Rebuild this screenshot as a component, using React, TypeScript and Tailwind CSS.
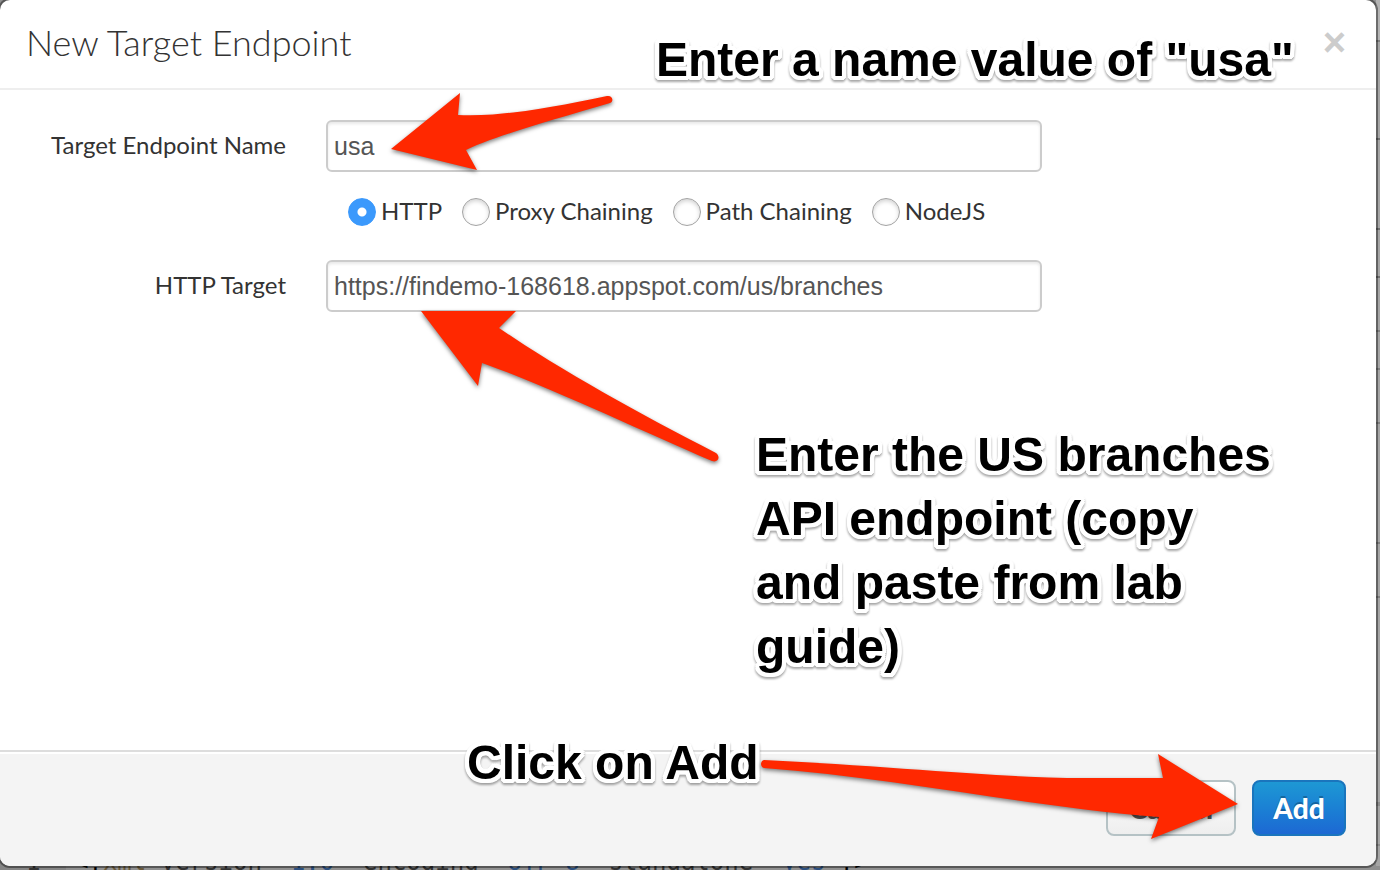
import type { ReactNode } from "react";

const TARGET_TYPES = ["HTTP", "Proxy Chaining", "Path Chaining", "NodeJS"];

const FIELD =
  "h-[52px] w-full max-w-[716px] rounded-[6px] border-2 border-[#cccccc] bg-white px-1.5 font-['Liberation_Sans',sans-serif] text-[25px] text-[#555555] shadow-[inset_0_2px_3px_rgba(0,0,0,0.09)] outline-none";

const LABEL = "w-[286px] shrink-0 pb-0.5 text-right text-[24px] leading-[30px] text-[#333333]";

const RADIO =
  "size-7 shrink-0 appearance-none rounded-full border border-[#a3a3a3] bg-white shadow-[inset_0_2px_4px_rgba(0,0,0,0.18)] checked:border-[#3b99fc] checked:bg-[radial-gradient(circle,#ffffff_0_4px,#3b99fc_5px)] checked:shadow-none";

function Note({ className, children }: { className: string; children: ReactNode }) {
  return (
    <p
      className={`absolute font-['Liberation_Sans',sans-serif] text-[48px] leading-[64px] font-bold whitespace-nowrap text-black drop-shadow-[0_2px_1px_rgba(0,0,0,0.35)] [text-shadow:4px_0_0_#fff,-4px_0_0_#fff,0_4px_0_#fff,0_-4px_0_#fff,3px_3px_0_#fff,-3px_3px_0_#fff,3px_-3px_0_#fff,-3px_-3px_0_#fff,4px_2px_0_#fff,-4px_2px_0_#fff,4px_-2px_0_#fff,-4px_-2px_0_#fff,2px_4px_0_#fff,-2px_4px_0_#fff,2px_-4px_0_#fff,-2px_-4px_0_#fff,2px_0_0_#fff,-2px_0_0_#fff] ${className}`}
    >
      {children}
    </p>
  );
}

function Arrows() {
  return (
    <svg
      className="absolute top-0 left-0 overflow-visible drop-shadow-[0_2px_2px_rgba(0,0,0,0.5)]"
      width="1380"
      height="870"
      fill="#ff2800"
      aria-hidden="true"
    >
      <path d="M391 149 L460 93 L458 115 C500 117 550 108 607 96 C613 95 614 102 610 103 C560 118 500 134 466 150 L477 170 Z" />
      <path d="M421 311 H516 L499 328 C560 370 640 414 716 453 C721 457 718 463 712 461 C640 430 545 385 482 363 L478 386 Z" />
      <path d="M764 760 C890 766 1000 778 1085 778 L1163 778 L1158 754 L1238 804 L1151 839 L1159 817 C1030 807 890 777 764 768 C760 767 760 761 764 760 Z" />
    </svg>
  );
}

function Backdrop() {
  return (
    <div className="flex w-1 shrink-0 flex-col bg-[#a5a5a5]" aria-hidden="true">
      <div className="h-[42px] border-b-2 border-[#808080] bg-[#b4b4b4]" />
      <div className="h-[98px] border-b-2 border-[#707070]" />
      <div className="h-[90px] border-b-2 border-[#707070]" />
      <div className="h-[48px] border-b-2 border-[#707070]" />
      <div className="h-[54px] border-b-2 border-[#808080]" />
      <div className="h-[38px] border-b-2 border-[#808080]" />
      <div className="h-[54px] border-b-2 border-[#808080]" />
      <div className="h-[120px] border-b-2 border-[#808080]" />
      <div className="h-[54px] border-b-2 border-[#808080]" />
      <div className="h-[208px] border-b-4 border-[#8d8d8d]" />
      <div className="h-[40px] border-b-2 border-[#8d8d8d]" />
    </div>
  );
}

export default function App() {
  return (
    <div className="relative flex h-screen min-h-[600px] flex-col overflow-hidden bg-[#909090] font-[Lato,sans-serif]">
      <div className="flex flex-1">
        <section
          role="dialog"
          aria-labelledby="dialog-title"
          className="relative z-10 flex min-w-0 flex-1 flex-col overflow-visible rounded-[10px] bg-white shadow-[0_0_0_2px_rgba(0,0,0,0.4)]"
        >
          <header className="flex h-[90px] items-center justify-between border-b-2 border-[#eeeeee] pr-[30px] pb-1 pl-[26px]">
            <h1 id="dialog-title" className="text-[36px] leading-[40px] font-light text-[#333333]">
              New Target Endpoint
            </h1>
            <button
              type="button"
              aria-label="Close"
              className="font-['Liberation_Sans',sans-serif] text-[40px] leading-[40px] font-bold text-[#cccccc]"
            >
              ×
            </button>
          </header>

          <form className="flex flex-1 flex-col">
            <div className="flex flex-1 flex-col pt-[30px]">
              <div className="flex items-center gap-10 pr-8">
                <label htmlFor="endpoint-name" className={LABEL}>
                  Target Endpoint Name
                </label>
                <input id="endpoint-name" type="text" defaultValue="usa" className={FIELD} />
              </div>

              <div role="radiogroup" aria-label="Target type" className="mt-6 ml-[348px] flex gap-5">
                {TARGET_TYPES.map((type, i) => (
                  <label
                    key={type}
                    className="flex h-8 items-center gap-[5px] text-[24px] leading-[30px] text-[#333333]"
                  >
                    <input type="radio" name="target-type" defaultChecked={i === 0} className={RADIO} />
                    <span className="pb-0.5">{type}</span>
                  </label>
                ))}
              </div>

              <div className="mt-8 flex items-center gap-10 pr-8">
                <label htmlFor="http-target" className={LABEL}>
                  HTTP Target
                </label>
                <input
                  id="http-target"
                  type="text"
                  defaultValue="https://findemo-168618.appspot.com/us/branches"
                  className={FIELD}
                />
              </div>
            </div>

            <footer className="flex h-[116px] items-start justify-end gap-4 rounded-b-[10px] border-t-2 border-[#dddddd] bg-[#f4f4f4] pt-7 pr-[30px] shadow-[inset_0_2px_0_#ffffff]">
              <button
                type="button"
                className="h-14 w-[130px] rounded-[8px] border-2 border-[#b5c2c5] bg-linear-to-b from-white to-[#eeeeee] text-[28px] leading-[32px] font-black text-[#555555]"
              >
                Cancel
              </button>
              <button
                type="submit"
                className="h-14 w-[94px] rounded-[8px] border-2 border-[#1a75bd] bg-linear-to-b from-[#1e98d4] to-[#1d68d3] text-[28px] leading-[32px] font-black text-white [text-shadow:0_-2px_0_rgba(0,0,0,0.25)]"
              >
                Add
              </button>
            </footer>
          </form>
        </section>
        <Backdrop />
      </div>

      <div className="flex h-1 items-end font-['DejaVu_Sans_Mono',monospace] text-[24px] leading-[16px] whitespace-pre text-[#333333]">
        <span className="w-[66px] shrink-0 bg-[#858585] pl-[26px]">1</span>
        <code className="pl-2 font-['DejaVu_Sans_Mono',monospace]">
          <span className="text-black">{"<?"}</span>
          <span className="text-[#6b5a3c]">xml</span>
          {" version="}
          <span className="text-[#2d5080]">{'"1.0"'}</span>
          {" encoding="}
          <span className="text-[#2d5080]">{'"UTF-8"'}</span>
          {" standalone="}
          <span className="text-[#2d5080]">{'"yes"'}</span>
          <span className="text-black">{"?>"}</span>
        </code>
      </div>

      <div className="pointer-events-none absolute inset-0 z-20">
        <Note className="top-[28px] left-[656px]">Enter a name value of "usa"</Note>
        <Note className="top-[423px] left-[756px]">
          Enter the US branches
          <br />
          API endpoint (copy
          <br />
          and paste from lab
          <br />
          guide)
        </Note>
        <Note className="top-[731px] left-[467px]">Click on Add</Note>
        <Arrows />
      </div>
    </div>
  );
}
